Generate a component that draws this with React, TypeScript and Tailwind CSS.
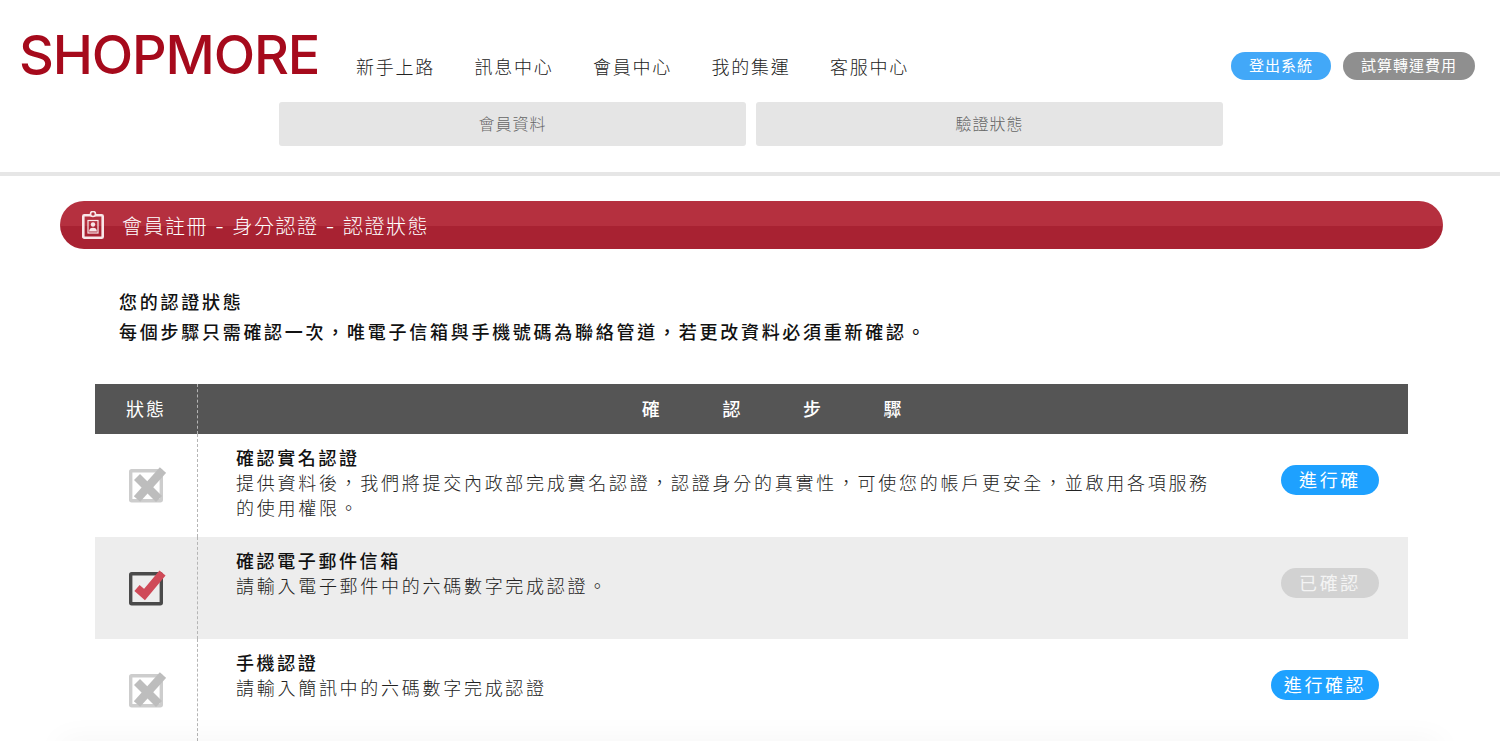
import React from 'react';

const cjk = "font-['Inter','Noto_Sans_CJK_TC',sans-serif]";

const navItems = ['新手上路', '訊息中心', '會員中心', '我的集運', '客服中心'];

const steps = [
  {
    title: '確認實名認證',
    desc: '提供資料後，我們將提交內政部完成實名認證，認證身分的真實性，可使您的帳戶更安全，並啟用各項服務的使用權限。',
    done: false,
    label: '進行確',
    rowClass: 'h-[103px] bg-white',
    btnClass: 'w-[98px] bg-[#1ea1ff] text-white',
  },
  {
    title: '確認電子郵件信箱',
    desc: '請輸入電子郵件中的六碼數字完成認證。',
    done: true,
    label: '已確認',
    rowClass: 'h-[102px] bg-[#ededed]',
    btnClass: 'w-[98px] bg-[#d2d2d2] text-[#f4f4f4]',
  },
  {
    title: '手機認證',
    desc: '請輸入簡訊中的六碼數字完成認證',
    done: false,
    label: '進行確認',
    rowClass: 'h-[102px] bg-white',
    btnClass: 'w-[108px] bg-[#1ea1ff] text-white',
  },
];

function BadgeIcon() {
  return (
    <svg width="22" height="28" viewBox="0 0 22 28" fill="none" className="shrink-0">
      <rect x="1.3" y="4.300" width="19.400" height="22.400" rx="1" stroke="#f8e6e8" strokeWidth="2.600" />
      <circle cx="11" cy="3" r="2.500" fill="#b5303f" stroke="#f8e6e8" strokeWidth="1.600" />
      <rect x="6" y="9.500" width="10" height="12.500" stroke="#f8e6e8" strokeWidth="1.200" />
      <circle cx="11" cy="13.500" r="2.200" fill="#f8e6e8" />
      <path d="M7 20.500c.3-2.800 1.700-3.700 4-3.700s3.700.9 4 3.700z" fill="#f8e6e8" />
    </svg>
  );
}

function StatusIcon({ done }: { done: boolean }) {
  const box = done ? '#4a4a4a' : '#cdcdcd';
  return (
    <svg width="38" height="38" viewBox="0 0 38 38" fill="none">
      <rect x="2.700" y="5.700" width="30.600" height="30" rx="1" stroke={box} strokeWidth="3.400" />
      {done ? (
        <path d="M9 20l7.500 6.500L34.500 5" stroke="#cf4a58" strokeWidth="8" />
      ) : (
        <>
          <path d="M9 12l22 22" stroke="#bdbdbd" strokeWidth="8.500" />
          <path d="M9 34L35 5" stroke="#bdbdbd" strokeWidth="8.500" />
        </>
      )}
    </svg>
  );
}

export default function App() {
  return (
    <div className={`relative h-[741px] overflow-hidden bg-white ${cjk}`}>
      <header className="h-[176px] border-b-4 border-[#e6e6e6]">
        <div className="flex h-[102px]">
          <div className="ml-[19px] mt-[22px] w-[337px] text-[54px] leading-[66px] font-medium tracking-[-1.15px] text-[#a60a1c]">
            SHOPMORE
          </div>
          <nav className="mt-[55px] flex h-[26px] gap-[41px] text-[18px] leading-[26px] font-light tracking-[1.75px] text-[#222]">
            {navItems.map((item) => (
              <span key={item} className="-mr-[1.5px]">{item}</span>
            ))}
          </nav>
          <div className="ml-auto mr-[25px] mt-[52px] flex h-[28px] gap-[12px] text-[15px] font-normal tracking-[1px] text-white">
            <span className="flex w-[100px] items-center justify-center rounded-full bg-[#42a8f8]">登出系統</span>
            <span className="flex w-[132px] items-center justify-center rounded-full bg-[#8f8f8f]">試算轉運費用</span>
          </div>
        </div>
        <div className="flex justify-center gap-[10px] pl-[2px] text-[16px] font-light tracking-[1px] text-[#666]">
          <div className="flex h-[44px] w-[467px] items-center justify-center rounded-[3px] bg-[#e5e5e5]">會員資料</div>
          <div className="flex h-[44px] w-[467px] items-center justify-center rounded-[3px] bg-[#e5e5e5]">驗證狀態</div>
        </div>
      </header>

      <div className="ml-[60px] mt-[25px] flex h-[48px] w-[1383px] items-center gap-[18px] rounded-full bg-[linear-gradient(#b5303f_0,#b5303f_52%,#a82232_52%,#a82232_100%)] pl-[22px] text-[20px] font-light tracking-[1.46px] text-white">
        <BadgeIcon />
        <span className="pt-[3px]">會員註冊 - 身分認證 - 認證狀態</span>
      </div>

      <div className="ml-[119px] mt-[38px] text-[18px] leading-[30px] font-medium tracking-[2.73px] text-[#111]">
        <p className="pt-[1px]">您的認證狀態</p>
        <p>每個步驟只需確認一次，唯電子信箱與手機號碼為聯絡管道，若更改資料必須重新確認。</p>
      </div>

      <section className="mx-[95px] mt-[36px] w-[1313px]">
        <div className="flex h-[50px] bg-[#555] text-[18px] text-white">
          <div className="flex w-[103px] items-center justify-center border-r border-dashed border-[#b5b5b5] tracking-[2px]">狀態</div>
          <div className="flex flex-1 items-center justify-center pt-[1px] font-medium tracking-[62.6px]">確認步驟</div>
        </div>
        {steps.map((step) => (
          <div key={step.title} className={`flex ${step.rowClass}`}>
            <div className="w-[103px] shrink-0 border-r border-dashed border-[#b5b5b5] pl-[33px] pt-[31px]">
              <StatusIcon done={step.done} />
            </div>
            <div className="w-[1020px] pl-[38px] pt-[12px] text-[18px] leading-[25px] font-light tracking-[2.72px] text-[#222]">
              <div className="font-medium tracking-[2.6px] text-[#111]">{step.title}</div>
              <p>{step.desc}</p>
            </div>
            <div className="flex flex-1 justify-end pr-[29px] pt-[31px]">
              <span className={`flex h-[30px] shrink-0 items-center justify-center overflow-hidden rounded-full pt-[1px] text-[18px] tracking-[2.6px] whitespace-nowrap ${step.btnClass}`}>
                {step.label}
              </span>
            </div>
          </div>
        ))}
      </section>
      <div className="absolute inset-x-[60px] -bottom-[20px] h-[20px] shadow-[0_0_30px_rgba(0,0,0,0.05)]" />
    </div>
  );
}
